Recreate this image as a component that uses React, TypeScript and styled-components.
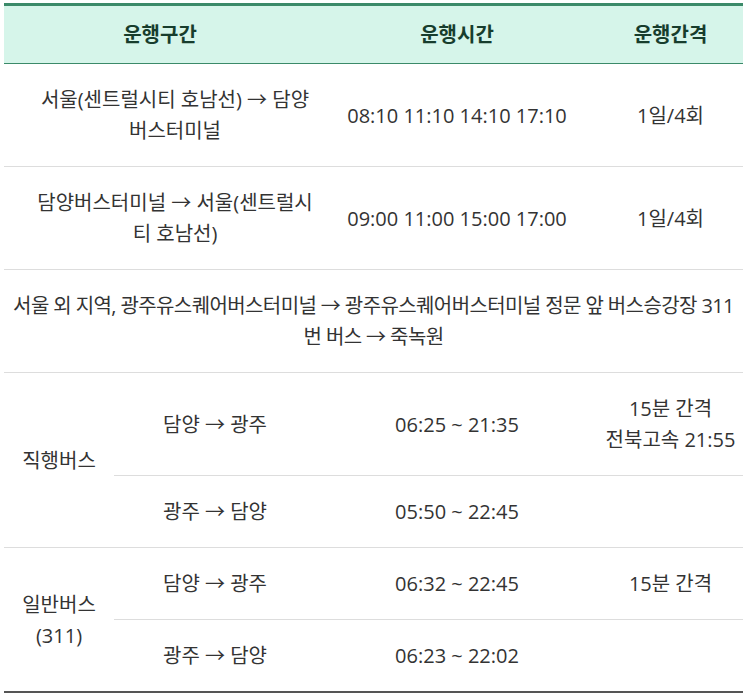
import React from "react";
import styled, { createGlobalStyle } from "styled-components";

const Global = createGlobalStyle`
  html, body { margin: 0; padding: 0; background: #ffffff; }
  body { font-family: "Open Sans", "Noto Sans CJK KR", sans-serif; }
`;

const Wrap = styled.div`
  padding: 3px 4px 0 4px;
`;

const Table = styled.table`
  width: 739px;
  border-collapse: collapse;
  table-layout: fixed;
  border-top: 3px solid #3b8a69;
  border-bottom: 2px solid #555555;
  font-family: "Open Sans", "Noto Sans CJK KR", sans-serif;
  font-size: 20px;
  line-height: 31px;
  color: #333333;
`;

const Th = styled.th`
  background: #d6f5ea;
  color: #173d2d;
  font-weight: 700;
  padding: 13px 10px;
  text-align: center;
  border-bottom: 1px solid #3b8a69;
`;

const Td = styled.td<{ $pl?: number; $pr?: number; $last?: boolean; $tight?: boolean }>`
  padding: 20px ${(p) => p.$pr ?? 10}px 20px ${(p) => p.$pl ?? 10}px;
  text-align: center;
  vertical-align: middle;
  border-bottom: ${(p) => (p.$last ? "none" : "1px solid #dddddd")};
  font-weight: 400;
  letter-spacing: ${(p) => (p.$tight ? "-0.6px" : "normal")};
`;

type Sub = { route: string; time: string; interval?: React.ReactNode };

const groups: { label: React.ReactNode; rows: Sub[] }[] = [
  {
    label: "직행버스",
    rows: [
      {
        route: "담양 → 광주",
        time: "06:25 ~ 21:35",
        interval: (
          <>
            15분 간격
            <br />
            전북고속 21:55
          </>
        ),
      },
      { route: "광주 → 담양", time: "05:50 ~ 22:45" },
    ],
  },
  {
    label: "일반버스 (311)",
    rows: [
      { route: "담양 → 광주", time: "06:32 ~ 22:45", interval: "15분 간격" },
      { route: "광주 → 담양", time: "06:23 ~ 22:02" },
    ],
  },
];

export default function App() {
  return (
    <Wrap>
      <Global />
      <Table>
        <colgroup>
          <col style={{ width: 110 }} />
          <col style={{ width: 202 }} />
          <col style={{ width: 282 }} />
          <col style={{ width: 145 }} />
        </colgroup>
        <thead>
          <tr>
            <Th colSpan={2}>운행구간</Th>
            <Th>운행시간</Th>
            <Th>운행간격</Th>
          </tr>
        </thead>
        <tbody>
          <tr>
            <Td colSpan={2} $pl={32} $pr={2}>
              서울(센트럴시티 호남선) → 담양 버스터미널
            </Td>
            <Td>08:10 11:10 14:10 17:10</Td>
            <Td $pl={4} $pr={4}>1일/4회</Td>
          </tr>
          <tr>
            <Td colSpan={2} $pl={32} $pr={2}>
              담양버스터미널 → 서울(센트럴시티 호남선)
            </Td>
            <Td>09:00 11:00 15:00 17:00</Td>
            <Td $pl={4} $pr={4}>1일/4회</Td>
          </tr>
          <tr>
            <Td colSpan={4} $pl={4} $pr={4} $tight>
              서울 외 지역, 광주유스퀘어버스터미널 → 광주유스퀘어버스터미널 정문 앞 버스승강장 311<wbr />번 버스 → 죽녹원
            </Td>
          </tr>
          {groups.map((g, gi) =>
            g.rows.map((r, ri) => {
              const lastRow = gi === groups.length - 1 && ri === g.rows.length - 1;
              return (
                <tr key={`${gi}-${ri}`}>
                  {ri === 0 && (
                    <Td rowSpan={g.rows.length} $last={gi === groups.length - 1}>
                      {g.label}
                    </Td>
                  )}
                  <Td $last={lastRow}>{r.route}</Td>
                  <Td $last={lastRow}>{r.time}</Td>
                  <Td $last={lastRow} $pl={4} $pr={4}>
                    {r.interval}
                  </Td>
                </tr>
              );
            })
          )}
        </tbody>
      </Table>
    </Wrap>
  );
}
